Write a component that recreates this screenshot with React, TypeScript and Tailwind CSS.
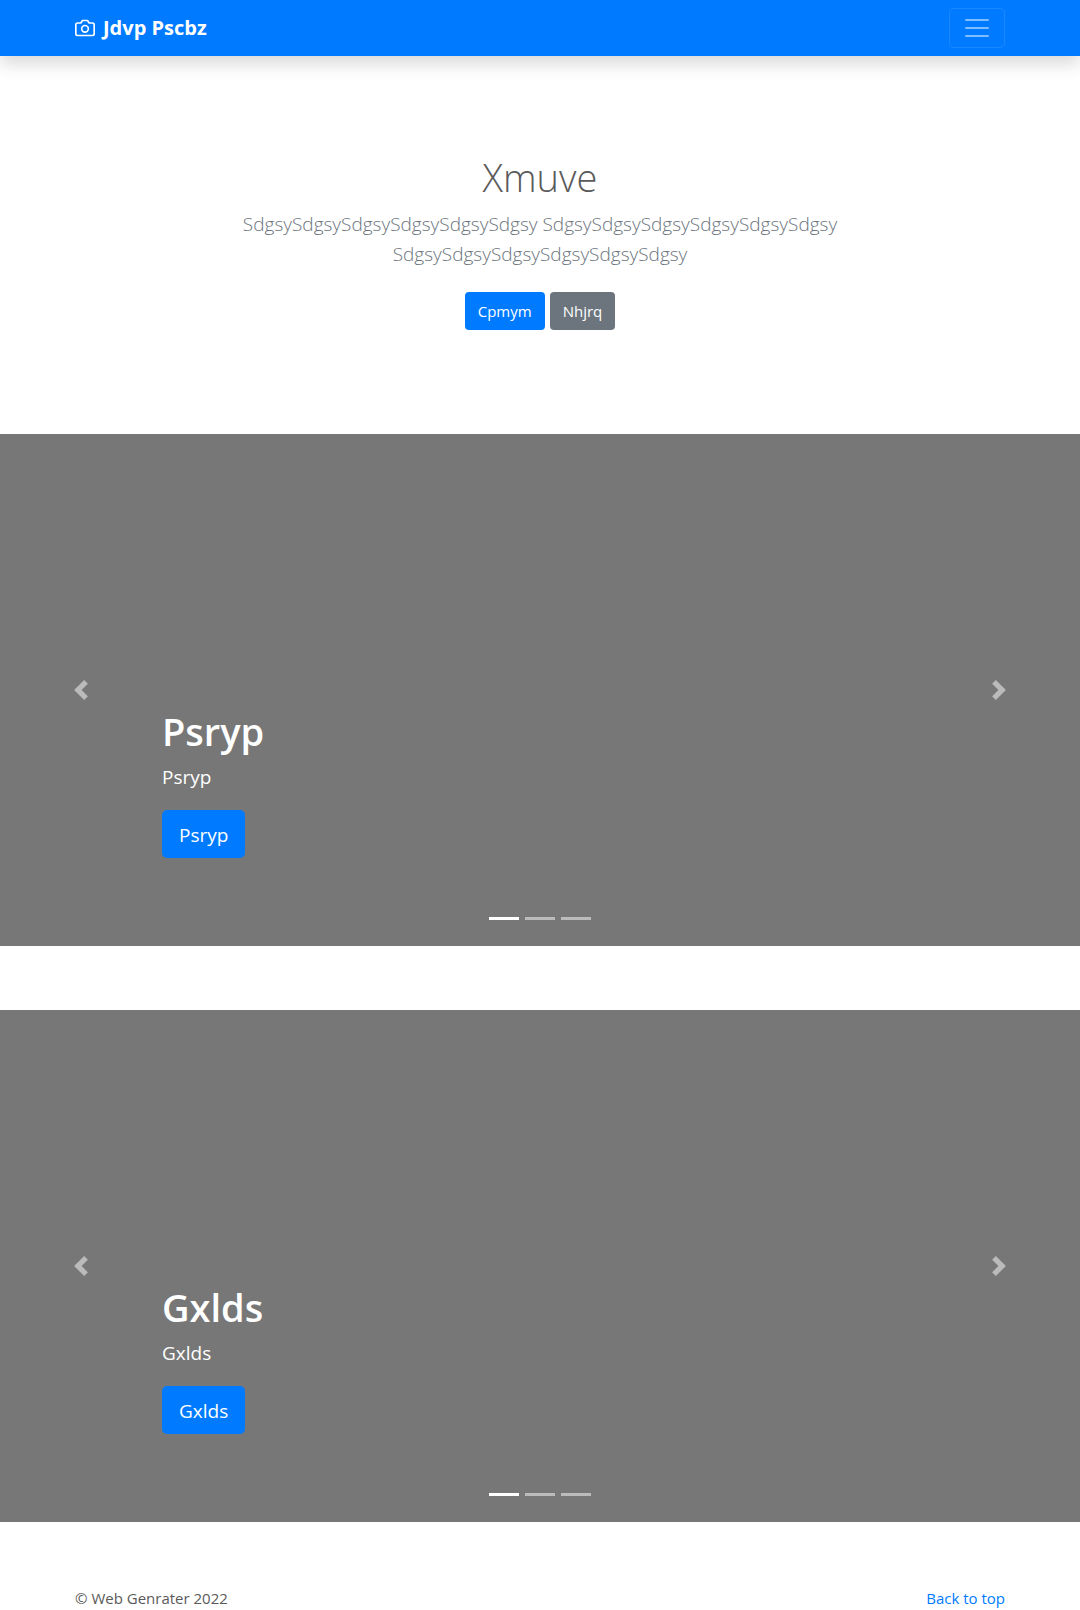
import React from "react";

function Slide({ text }: { text: string }) {
  return (
    <section className="relative mb-16 flex h-[512px] flex-col justify-end bg-[#777] px-[15%] text-white">
      <div className="pb-[88px]">
        <h2 className="mb-2 text-[38px] leading-[48px] font-semibold">{text}</h2>
        <p className="mb-[19px] text-[19px] leading-7">{text}</p>
        <a href="#" className="inline-block rounded-[5px] bg-[#007bff] px-[17px] pt-[10px] pb-2 text-[19px] leading-[30px]">{text}</a>
      </div>
      <button aria-label="Previous" className="absolute inset-y-0 left-0 flex w-[15%] items-center justify-center opacity-50">
        <svg viewBox="0 0 8 8" className="size-5" fill="#fff"><path d="M5.25 0l-4 4 4 4 1.5-1.5L4.25 4l2.5-2.5L5.25 0z" /></svg>
      </button>
      <button aria-label="Next" className="absolute inset-y-0 right-0 flex w-[15%] items-center justify-center opacity-50">
        <svg viewBox="0 0 8 8" className="size-5" fill="#fff"><path d="M2.75 0l-1.5 1.5L3.75 4l-2.5 2.5L2.75 8l4-4-4-4z" /></svg>
      </button>
      <div className="absolute inset-x-0 bottom-[26px] flex justify-center gap-1.5">
        <button aria-label="Slide 1" className="h-[3px] w-[30px] bg-white" />
        <button aria-label="Slide 2" className="h-[3px] w-[30px] bg-white/50" />
        <button aria-label="Slide 3" className="h-[3px] w-[30px] bg-white/50" />
      </div>
    </section>
  );
}

export default function App() {
  return (
    <div className="bg-white font-['Open_Sans',sans-serif] text-[#5a5a5a]">
      <header className="bg-[#007bff] shadow-[0_8px_16px_rgba(0,0,0,0.15)]">
        <nav className="mx-[75px] flex h-14 items-center justify-between">
          <a href="#" className="flex items-center gap-2 text-[20px] leading-[30px] font-bold text-white">
            <svg viewBox="0 0 24 24" className="size-5" fill="none" stroke="#fff" strokeWidth="2" strokeLinecap="round" strokeLinejoin="round">
              <path d="M23 19a2 2 0 0 1-2 2H3a2 2 0 0 1-2-2V8a2 2 0 0 1 2-2h4l2-3h6l2 3h4a2 2 0 0 1 2 2z" />
              <circle cx="12" cy="13" r="4" />
            </svg>
            Jdvp Pscbz
          </a>
          <button aria-label="Menu" className="flex h-10 w-14 items-center justify-center rounded-[5px] border border-white/10">
            <svg viewBox="0 0 30 30" className="size-[30px]" stroke="rgba(255,255,255,0.5)" strokeWidth="2" strokeLinecap="round" strokeMiterlimit="10"><path d="M4 7h22M4 15h22M4 23h22" /></svg>
          </button>
        </nav>
      </header>
      <main>
        <section className="mx-auto max-w-[640px] pt-[97px] pb-[104px] text-center">
          <h1 className="mb-2 text-[38px] leading-[48px] font-light">Xmuve</h1>
          <p className="mb-[23px] text-[19px] leading-[30px] font-light text-[#6c757d]">SdgsySdgsySdgsySdgsySdgsySdgsy SdgsySdgsySdgsySdgsySdgsySdgsy SdgsySdgsySdgsySdgsySdgsySdgsy</p>
          <div className="flex justify-center gap-[5px] text-[15px] leading-6 text-white">
            <a href="#" className="rounded bg-[#007bff] px-[13px] py-[7px]">Cpmym</a>
            <a href="#" className="rounded bg-[#6c757d] px-[13px] py-[7px]">Nhjrq</a>
          </div>
        </section>
        <Slide text="Psryp" />
        <Slide text="Gxlds" />
      </main>
      <footer className="mx-[75px] flex justify-between text-[15px] leading-6">
        <p>© Web Genrater 2022</p>
        <a href="#" className="text-[#007bff]">Back to top</a>
      </footer>
    </div>
  );
}
